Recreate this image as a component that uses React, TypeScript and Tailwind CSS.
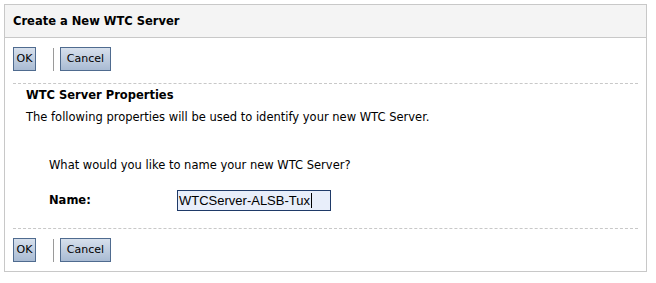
const font = { fontFamily: '"DejaVu Sans", Verdana, sans-serif' };

function Btn({ label, width }: { label: string; width: string }) {
  return (
    <button
      className={`h-[24px] ${width} border border-[#4f6b8f] bg-gradient-to-b from-[#d7e0ec] to-[#a9bbd3] text-[11px] text-black flex items-center justify-center`}
    >
      {label}
    </button>
  );
}

function ButtonBar() {
  return (
    <div className="flex items-center pl-[8px]">
      <Btn label="OK" width="w-[23px]" />
      <div className="w-px h-[23px] bg-[#9a9a9a] ml-[17px] mr-[6px]" />
      <Btn label="Cancel" width="w-[51px]" />
    </div>
  );
}

export default function App() {
  return (
    <div className="w-[656px] h-[283px] bg-white pt-[4px] pl-[4px]" style={font}>
      <div className="w-[643px] h-[268px] border border-[#c8c8c8]">
        <div className="h-[33px] bg-[#f4f4f4] border-b border-[#c8c8c8] flex items-center pl-[8px] pt-[2px]">
          <h1 className="text-[11.5px] font-bold text-black">Create a New WTC Server</h1>
        </div>

        <div className="mt-[9px]">
          <ButtonBar />
        </div>

        <div className="mx-[8px] mt-[12px] border-t border-dashed border-[#c8c8c8]" />

        <div className="pl-[21px] pt-[3px] text-[11.5px] text-black">
          <h2 className="font-bold leading-[16px]">WTC Server Properties</h2>
          <p className="mt-[6px] leading-[16px]">
            The following properties will be used to identify your new WTC Server.
          </p>
          <p className="mt-[32px] pl-[23px] leading-[16px]">What would you like to name your new WTC Server?</p>
          <div className="mt-[17px] pl-[23px] flex items-center">
            <label className="w-[128px] font-bold">Name:</label>
            <div className="w-[154px] h-[21px] border border-[#1f3a68] bg-[#e8eefa] flex items-center pl-[1px]">
              <span style={{ fontFamily: '"Liberation Sans", Arial, sans-serif' }} className="text-[13px]">
                WTCServer-ALSB-Tux
              </span>
              <span className="w-px h-[15px] bg-black ml-[1px]" />
            </div>
          </div>
        </div>

        <div className="mx-[8px] mt-[17px] border-t border-dashed border-[#c8c8c8]" />

        <div className="mt-[9px]">
          <ButtonBar />
        </div>
      </div>
    </div>
  );
}
